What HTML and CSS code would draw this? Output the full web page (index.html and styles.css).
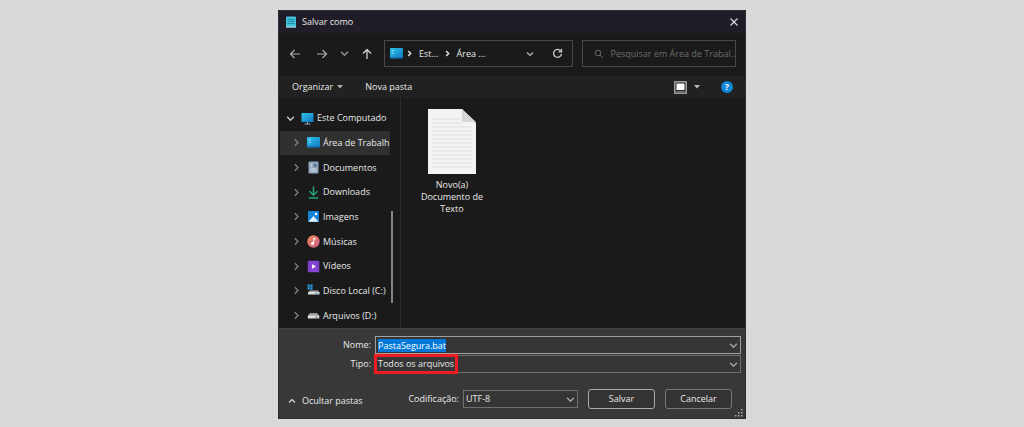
FILE: index.html
```html
<!DOCTYPE html>
<html lang="pt-BR">
<head>
<meta charset="utf-8">
<title>Salvar como</title>
<link rel="stylesheet" href="styles.css">
</head>
<body>
<svg class="defs" width="0" height="0" aria-hidden="true">
  <defs>
    <linearGradient id="blue" x1="0" y1="0" x2="1" y2="1"><stop offset="0" stop-color="#2fc4e8"/><stop offset="1" stop-color="#1275c4"/></linearGradient>
    <linearGradient id="rose" x1="0" y1="0" x2="1" y2="1"><stop offset="0" stop-color="#f08a5a"/><stop offset="1" stop-color="#c95b86"/></linearGradient>
    <symbol id="right" viewBox="0 0 8 8"><path d="M2.500 1.200 5.300 4 2.500 6.800" fill="none" stroke="currentColor" stroke-width="1.2"/></symbol>
    <symbol id="down" viewBox="0 0 8 8"><path d="M1 2.500 4 5.500 7 2.500" fill="none" stroke="currentColor" stroke-width="1.2"/></symbol>
    <symbol id="desktop" viewBox="0 0 12 10"><rect width="12" height="9.600" rx="1" fill="url(#blue)"/><path d="M2 2.500h1.400M2 4.800h1.400" stroke="#b8f2ff"/><path d="M0 8.800h12" stroke="#0d66a8" stroke-width=".8"/></symbol>
  </defs>
</svg>
<main class="dialog">
  <header class="titlebar">
    <svg class="app-icon" width="10" height="12" viewBox="0 0 10 12"><rect y=".5" width="10" height="11" rx="1" fill="#42c0dc"/><path d="M1.500 3.500h7M1.500 5.500h7M1.500 7.500h7" stroke="#167b9b" stroke-width=".8"/><path d="M0 11h10" stroke="#b9dce4"/></svg>
    <h1 class="title">Salvar como</h1>
    <button class="icon-btn" aria-label="Fechar"><svg width="10" height="10" viewBox="0 0 10 10"><path d="M1.500 1.500l7 7M8.500 1.500l-7 7" stroke="#ddd" stroke-width="1.1"/></svg></button>
  </header>

  <nav class="navbar">
    <div class="history">
      <button class="icon-btn back" aria-label="Voltar"><svg width="12" height="12" viewBox="0 0 12 12"><path d="M11 6H1.500M5.500 2 1.500 6l4 4" fill="none" stroke="#aaa" stroke-width="1.2"/></svg></button>
      <button class="icon-btn" aria-label="Avançar"><svg width="12" height="12" viewBox="0 0 12 12"><path d="M1 6h9.500M6.500 2l4 4-4 4" fill="none" stroke="#aaa" stroke-width="1.2"/></svg></button>
      <button class="icon-btn dim" aria-label="Locais recentes"><svg width="9" height="9"><use href="#down"/></svg></button>
      <button class="icon-btn" aria-label="Acima"><svg width="12" height="12" viewBox="0 0 12 12"><path d="M6 11V1.500M2 5.500l4-4 4 4" fill="none" stroke="#ddd" stroke-width="1.2"/></svg></button>
    </div>
    <div class="address">
      <svg width="13" height="11"><use href="#desktop"/></svg>
      <svg class="crumb-sep" width="7" height="7" viewBox="0 0 8 8"><path d="M2.500 1.200 5.300 4 2.500 6.800" fill="none" stroke="#ddd" stroke-width="1.800"/></svg>
      <a class="crumb" href="#">Est...</a>
      <svg class="crumb-sep" width="7" height="7" viewBox="0 0 8 8"><path d="M2.500 1.200 5.300 4 2.500 6.800" fill="none" stroke="#ddd" stroke-width="1.800"/></svg>
      <a class="crumb" href="#">Área ...</a>
      <div class="address-tools">
        <button class="icon-btn soft" aria-label="Locais anteriores"><svg width="8" height="8"><use href="#down"/></svg></button>
        <button class="icon-btn" aria-label="Atualizar"><svg width="11" height="11" viewBox="0 0 11 11"><path d="M8.800 3A4 4 0 1 0 9.500 5.800" fill="none" stroke="#ccc" stroke-width="1.300"/><path d="M9.500 .8v3H6.500" fill="none" stroke="#ccc" stroke-width="1.300"/></svg></button>
      </div>
    </div>
    <label class="search">
      <svg width="10" height="10" viewBox="0 0 10 10"><circle cx="4" cy="4" r="2.800" fill="none" stroke="#666"/><path d="M6 6l3 3" stroke="#666"/></svg>
      <input class="search-input" type="text" aria-label="Pesquisar" placeholder="Pesquisar em Área de Trabal...">
    </label>
  </nav>

  <div class="toolbar">
    <button class="tool">Organizar <svg width="6" height="4" viewBox="0 0 6 4"><path d="M0 0h6L3 3.500z" fill="#aaa"/></svg></button>
    <button class="tool">Nova pasta</button>
    <div class="view-tools">
      <button class="icon-btn" aria-label="Modo de exibição"><svg width="13" height="13" viewBox="0 0 13 13"><rect x=".8" y=".8" width="11.400" height="11.400" fill="#222" stroke="#aaa" stroke-width="1.4"/><rect x="2.500" y="2.500" width="8" height="6.500" fill="#fff"/><path d="M2.500 10.500h8" stroke="#777"/></svg></button>
      <button class="icon-btn" aria-label="Mais opções"><svg width="6" height="4" viewBox="0 0 6 4"><path d="M0 0h6L3 3.500z" fill="#bbb"/></svg></button>
      <button class="help" aria-label="Ajuda">?</button>
    </div>
  </div>

  <div class="content">
    <div class="sidebar">
      <ul class="tree">
        <li class="node root"><svg class="twist" width="9" height="9"><use href="#down"/></svg><svg width="13" height="13" viewBox="0 0 13 13"><rect x=".5" y="1" width="12" height="9" rx=".8" fill="url(#blue)"/><path d="M6.500 10v2M3.500 12h6" stroke="#8ab0c4"/></svg><span class="name">Este Computado</span></li>
        <li class="node selected"><svg class="twist" width="9" height="9"><use href="#right"/></svg><svg width="13" height="11"><use href="#desktop"/></svg><span class="name">Área de Trabalh</span></li>
        <li class="node"><svg class="twist" width="9" height="9"><use href="#right"/></svg><svg width="13" height="13" viewBox="0 0 13 13"><rect x="1.500" y=".5" width="10" height="12" rx="1" fill="#8fa3bb"/><path d="M3.500 3.500h2M3.500 5.500h2M3.500 8h6M3.500 10h6" stroke="#e6eef6" stroke-width=".9"/><rect x="6.500" y="3" width="3" height="3" fill="#5c7694"/></svg><span class="name">Documentos</span></li>
        <li class="node"><svg class="twist" width="9" height="9"><use href="#right"/></svg><svg width="13" height="13" viewBox="0 0 13 13"><path d="M6.500 .5V9M2.500 5.300l4 4 4-4M1.800 12h9.400" fill="none" stroke="#24a57c" stroke-width="1.500"/></svg><span class="name">Downloads</span></li>
        <li class="node"><svg class="twist" width="9" height="9"><use href="#right"/></svg><svg width="13" height="13" viewBox="0 0 13 13"><rect x="1" y="1" width="11" height="11" rx="1" fill="#1584d8"/><path d="M1.500 11.800 6.500 6l5 5.800z" fill="#e4f4ff"/><circle cx="9" cy="4" r="1.200" fill="#fff"/></svg><span class="name">Imagens</span></li>
        <li class="node"><svg class="twist" width="9" height="9"><use href="#right"/></svg><svg width="13" height="13" viewBox="0 0 13 13"><circle cx="6.500" cy="6.500" r="6.200" fill="url(#rose)"/><path d="M6.700 8.500V3l2.300 1.300" fill="none" stroke="#fff"/><circle cx="5.500" cy="8.600" r="1.500" fill="#fff"/></svg><span class="name">Músicas</span></li>
        <li class="node"><svg class="twist" width="9" height="9"><use href="#right"/></svg><svg width="13" height="13" viewBox="0 0 13 13"><rect x=".8" y=".8" width="11.500" height="11.500" rx="1" fill="#8547d3"/><path d="M2.300 2v9M10.800 2v9" stroke="#5c28a5" stroke-dasharray="1.300 1"/><path d="M5 4.200v4.600l4-2.300z" fill="#fff"/></svg><span class="name">Vídeos</span></li>
        <li class="node"><svg class="twist" width="9" height="9"><use href="#right"/></svg><svg width="13" height="13" viewBox="0 0 13 13"><path d="M.5 .5h2.300v2.300H.5zM3.300 .5h2.300v2.300H3.300zM.5 3.300h2.300v2.300H.5zM3.300 3.300h2.300v2.300H3.300z" fill="#2a9be0"/><path d="M3 6.200h7.500l1.700 2H1.300z" fill="#888"/><rect x="1" y="7.800" width="11.500" height="2.800" rx=".7" fill="#ddd"/><path d="M8 9.300h3" stroke="#279ad8" stroke-width=".8"/></svg><span class="name">Disco Local (C:)</span></li>
        <li class="node"><svg class="twist" width="9" height="9"><use href="#right"/></svg><svg width="13" height="13" viewBox="0 0 13 13"><path d="M3 4h7l2 2.500H1z" fill="#999"/><rect x=".8" y="6.300" width="11.500" height="3.300" rx=".7" fill="#ddd"/><path d="M8 8.200h3" stroke="#666" stroke-width=".8"/></svg><span class="name">Arquivos (D:)</span></li>
      </ul>
      <div class="scrollbar"><div class="thumb"></div></div>
    </div>
    <div class="files">
      <figure class="file">
        <svg width="48" height="65" viewBox="0 0 48 65"><path d="M0 0h34l14 14v51H0z" fill="#f4f4f4"/><path d="M4 10h29M4 14h29M4 18h40M4 22h40M4 26h40M4 30h40M4 34h40M4 38h40M4 42h40M4 46h40M4 50h40M4 54h40M4 58h40" stroke="#d9dcde"/><path d="M34 0v13h14z" fill="#d6d6d6"/></svg>
        <figcaption class="file-name">Novo(a) Documento de Texto</figcaption>
      </figure>
    </div>
  </div>

  <form class="footer">
    <div class="fields">
      <label class="label" for="nome">Nome:</label>
      <div class="combo focused">
        <input id="nome" class="control" type="text" value="PastaSegura.bat" spellcheck="false">
        <svg class="arrow" width="9" height="9"><use href="#down"/></svg>
      </div>
      <label class="label" for="tipo">Tipo:</label>
      <div class="combo">
        <select id="tipo" class="control"><option>Todos os arquivos</option></select>
        <svg class="arrow" width="9" height="9"><use href="#down"/></svg>
        <span class="highlight"></span>
      </div>
    </div>
    <div class="actions">
      <button class="toggle" type="button"><svg width="8" height="8" viewBox="0 0 8 8"><path d="M1 5.500 4 2.500l3 3" fill="none" stroke="#ddd" stroke-width="1.200"/></svg>Ocultar pastas</button>
      <label class="label encoding-label" for="cod">Codificação:</label>
      <div class="combo encoding">
        <select id="cod" class="control"><option>UTF-8</option></select>
        <svg class="arrow" width="9" height="9"><use href="#down"/></svg>
      </div>
      <button class="btn primary" type="button">Salvar</button>
      <button class="btn" type="button">Cancelar</button>
    </div>
    <svg class="grip" width="8" height="8" viewBox="0 0 8 8"><path d="M6 0h1.500v1.500H6zM6 3h1.500v1.500H6zM6 6h1.500v1.500H6zM3 3h1.500v1.500H3zM3 6h1.500v1.500H3zM0 6h1.500v1.500H0z" fill="#aaa"/></svg>
  </form>
</main>
<script src="main.js"></script>
</body>
</html>
```
FILE: styles.css
```css
* { box-sizing: border-box; }
body {
  margin: 0;
  min-height: 100vh;
  padding: 10px;
  background: #d9d9d9;
  color: #e8e8e8;
  font: 9px/12px "Open Sans", "Noto Sans", sans-serif;
}
button, input, select { font: inherit; color: inherit; background: none; border: 0; padding: 0; margin: 0; }
button { cursor: pointer; }
svg { flex: none; display: block; }
.defs { position: absolute; }
.dialog {
  width: 100%;
  max-width: 468px;
  margin: 0 auto;
  background: #1a1a1a;
  border: 1px solid #2c2c34;
}
.titlebar { display: flex; align-items: center; height: 22px; padding: 0 6px 0 7px; gap: 6px; background: #201d29; }
.title { flex: 1; margin: 0; font: inherit; }
.icon-btn { display: flex; align-items: center; justify-content: center; }
.dim { color: #999; }
.soft { color: #bbb; }

.navbar { display: flex; align-items: center; height: 43px; padding: 0 9px 2px; gap: 9px; }
.history { display: flex; align-items: center; gap: 12px; padding: 0 2px 0 1px; }
.back { margin-right: 3px; }
.address { display: flex; align-items: center; flex: 189; height: 27px; padding: 0 9px 0 5px; border: 1px solid #484848; min-width: 0; }
.crumb { color: inherit; text-decoration: none; white-space: nowrap; }
.crumb-sep { margin: 0 6px 0 3px; }
.crumb + .crumb-sep { margin-left: 5px; }
.address-tools { display: flex; align-items: center; gap: 18px; margin-left: auto; }
.search { display: flex; align-items: center; flex: 155; gap: 7px; height: 27px; padding: 0 0 0 11px; border: 1px solid #484848; min-width: 0; }
.search-input { flex: 1; min-width: 0; outline: 0; }
.search-input::placeholder { color: #6c6c6c; opacity: 1; }

.toolbar { display: flex; align-items: center; height: 22px; padding: 0 12px 0 13px; gap: 22px; background: #212121; }
.tool { display: flex; align-items: center; gap: 4px; }
.view-tools { display: flex; align-items: center; gap: 7px; margin-left: auto; }
.help { width: 12px; height: 12px; margin-left: 14px; border-radius: 50%; background: #0f86d8; color: #fff; font-weight: 700; }

.content { display: flex; height: 230px; }
.sidebar { display: flex; width: 122px; padding-left: 1px; border-right: 1px solid #2b2b2b; }
.tree { display: grid; grid-auto-rows: 1fr; flex: 1; min-width: 0; margin: 0; padding: 8px 0 0; list-style: none; }
.node { display: flex; align-items: center; padding-left: 12px; gap: 3px; white-space: nowrap; }
.node .twist { margin-right: 3px; color: #808080; }
.node.root { padding-left: 6px; }
.node.root .twist { color: #ccc; }
.node.selected { background: #303030; }
.scrollbar { width: 15px; padding: 113px 0 25px 6px; }
.thumb { width: 2px; height: 100%; background: #858585; }
.files { flex: 1; padding: 11px 19px; }
.file { display: flex; flex-direction: column; align-items: center; gap: 5px; width: 64px; margin: 0; text-align: center; }

.footer { position: relative; height: 90px; padding: 7px 4px 0; background: #383838; border-top: 1px solid #414141; }
.fields { display: grid; grid-template-columns: 88px 1fr; gap: 1px 4px; align-items: center; }
.label { text-align: right; }
.combo { position: relative; display: flex; align-items: center; height: 18px; border: 1px solid #6f6f6f; background: #353535; }
.combo.focused { border-color: #a0a0a0; }
.control { appearance: none; flex: 1; min-width: 0; height: 100%; padding: 0 14px 0 2px; outline: 0; }
.control::selection { background: #0078d7; color: #fff; }
.arrow { position: absolute; right: 2px; color: #a5a5a5; pointer-events: none; }
.highlight { position: absolute; left: -2px; top: -2px; width: 84px; height: 20px; border: 3px solid #ed1c24; pointer-events: none; }
.actions { display: flex; align-items: center; height: 20px; margin: 16px 9px 0 5px; gap: 10px; }
.toggle { display: flex; align-items: center; gap: 6px; padding-top: 4px; }
.encoding-label { margin-left: auto; margin-right: -6px; }
.encoding { width: 115px; }
.btn { width: 67px; height: 20px; border: 1px solid #777; border-radius: 3px; background: #333; }
.btn.primary { border-color: #aaa; }
.grip { position: absolute; right: 2px; bottom: 1px; }
```
FILE: main.js
```js
const nameField = document.getElementById("nome");
nameField.focus();
nameField.select();
```
